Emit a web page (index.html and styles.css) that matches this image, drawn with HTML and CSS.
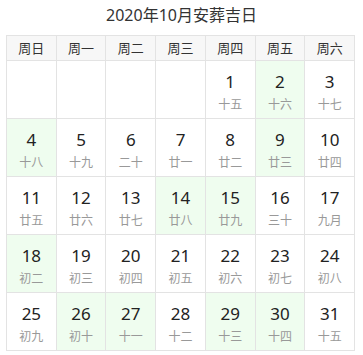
FILE: index.html
```html
<!DOCTYPE html>
<html lang="zh-CN">
<head>
<meta charset="utf-8">
<title>2020年10月安葬吉日</title>
<link rel="stylesheet" href="styles.css">
</head>
<body>
<div class="page">
  <h1 class="title">2020年10月安葬吉日</h1>
  <div class="calendar">
    <div class="head">周日</div>
    <div class="head">周一</div>
    <div class="head">周二</div>
    <div class="head">周三</div>
    <div class="head">周四</div>
    <div class="head">周五</div>
    <div class="head">周六</div>

    <div class="day empty"></div>
    <div class="day empty"></div>
    <div class="day empty"></div>
    <div class="day empty"></div>
    <div class="day"><span class="num">1</span><span class="lunar">十五</span></div>
    <div class="day good"><span class="num">2</span><span class="lunar">十六</span></div>
    <div class="day"><span class="num">3</span><span class="lunar">十七</span></div>

    <div class="day good"><span class="num">4</span><span class="lunar">十八</span></div>
    <div class="day"><span class="num">5</span><span class="lunar">十九</span></div>
    <div class="day"><span class="num">6</span><span class="lunar">二十</span></div>
    <div class="day"><span class="num">7</span><span class="lunar">廿一</span></div>
    <div class="day"><span class="num">8</span><span class="lunar">廿二</span></div>
    <div class="day good"><span class="num">9</span><span class="lunar">廿三</span></div>
    <div class="day"><span class="num">10</span><span class="lunar">廿四</span></div>

    <div class="day"><span class="num">11</span><span class="lunar">廿五</span></div>
    <div class="day"><span class="num">12</span><span class="lunar">廿六</span></div>
    <div class="day"><span class="num">13</span><span class="lunar">廿七</span></div>
    <div class="day good"><span class="num">14</span><span class="lunar">廿八</span></div>
    <div class="day good"><span class="num">15</span><span class="lunar">廿九</span></div>
    <div class="day"><span class="num">16</span><span class="lunar">三十</span></div>
    <div class="day"><span class="num">17</span><span class="lunar">九月</span></div>

    <div class="day good"><span class="num">18</span><span class="lunar">初二</span></div>
    <div class="day"><span class="num">19</span><span class="lunar">初三</span></div>
    <div class="day"><span class="num">20</span><span class="lunar">初四</span></div>
    <div class="day"><span class="num">21</span><span class="lunar">初五</span></div>
    <div class="day"><span class="num">22</span><span class="lunar">初六</span></div>
    <div class="day"><span class="num">23</span><span class="lunar">初七</span></div>
    <div class="day"><span class="num">24</span><span class="lunar">初八</span></div>

    <div class="day"><span class="num">25</span><span class="lunar">初九</span></div>
    <div class="day good"><span class="num">26</span><span class="lunar">初十</span></div>
    <div class="day good"><span class="num">27</span><span class="lunar">十一</span></div>
    <div class="day"><span class="num">28</span><span class="lunar">十二</span></div>
    <div class="day good"><span class="num">29</span><span class="lunar">十三</span></div>
    <div class="day good"><span class="num">30</span><span class="lunar">十四</span></div>
    <div class="day"><span class="num">31</span><span class="lunar">十五</span></div>
  </div>
</div>
</body>
</html>
```
FILE: styles.css
```css
html, body {
  margin: 0;
  padding: 0;
  background: #fff;
}

body {
  font-family: "Noto Sans", "Noto Sans CJK SC", sans-serif;
  color: #333;
}

.page {
  padding: 0 6px;
}

.title {
  margin: 0;
  height: 35px;
  line-height: 30px;
  font-size: 16px;
  font-weight: normal;
  text-align: center;
  color: #333;
}

/* month grid: outer border on top/left, each cell draws right/bottom */
.calendar {
  width: 349px;
  box-sizing: border-box;
  display: grid;
  grid-template-columns: repeat(7, 1fr);
  grid-template-rows: 25px repeat(5, 58px);
  border-top: 1px solid #e3e3e3;
  border-left: 1px solid #e3e3e3;
}

.head,
.day {
  border-right: 1px solid #e3e3e3;
  border-bottom: 1px solid #e3e3e3;
}

.head {
  background: #f7f7f7;
  font-size: 13px;
  line-height: 24px;
  text-align: center;
  color: #333;
}

.day {
  display: flex;
  flex-direction: column;
  align-items: center;
  padding-top: 11px;
}

.day.good {
  background: #effdef;
}

.num {
  font-size: 17px;
  line-height: 20px;
  color: #222;
}

.lunar {
  margin-top: 5px;
  font-size: 12px;
  line-height: 16px;
  color: #999;
}
```
